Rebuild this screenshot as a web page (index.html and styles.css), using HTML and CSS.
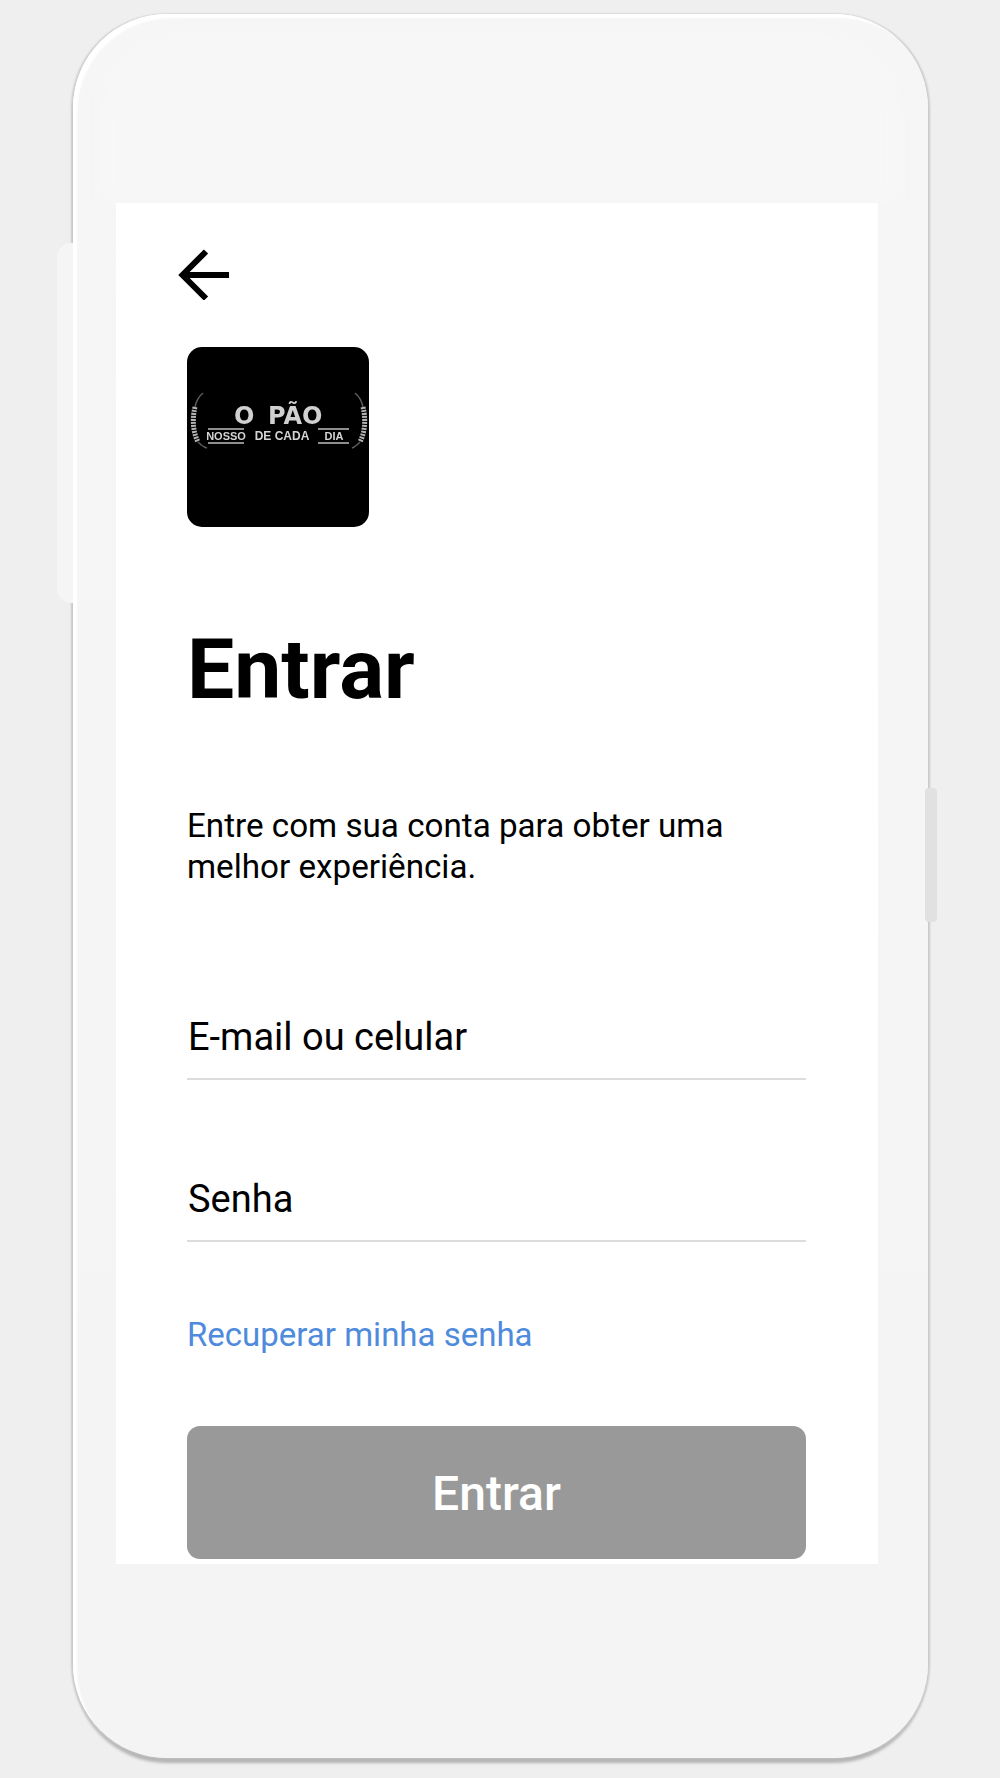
FILE: index.html
```html
<!DOCTYPE html>
<html lang="pt-BR">
<head>
<meta charset="utf-8">
<title>Entrar</title>
<link rel="stylesheet" href="styles.css">
</head>
<body>
<div class="phone">
  <span class="side-btn side-left"></span>
  <span class="side-btn side-right"></span>
  <div class="glare"></div>
  <main class="screen">
    <svg class="back" width="52" height="52" viewBox="0 0 52 52" aria-label="Voltar">
      <path d="M51 27H7M28 3.500 4.500 27 28 50.500" fill="none" stroke="#000" stroke-width="6"/>
    </svg>
    <div class="logo">
      <svg class="logo-art" width="182" height="180" viewBox="0 0 182 180">
        <g fill="none" stroke="#5c5c5c" stroke-width="1.500">
          <path d="M16 46C11 50 9 55 8 60"/>
          <path d="M11 95C13 97 16 100 20 101"/>
          <path d="M168 46C173 50 175 55 176 60"/>
          <path d="M173 95C171 97 168 100 165 101"/>
        </g>
        <g fill="none" stroke="#b4b4b4" stroke-width="5" stroke-dasharray="2 1">
          <path d="M8 60C5 72 6 85 11 95"/>
          <path d="M176 60C179 72 178 85 173 95"/>
        </g>
        <text class="logo-big" x="47" y="77">O</text>
        <text class="logo-big" x="81" y="77">PÃO</text>
        <text class="logo-small" x="39" y="93" text-anchor="middle">NOSSO</text>
        <text class="logo-small logo-mid" x="95" y="93" text-anchor="middle">DE CADA</text>
        <text class="logo-small" x="147" y="93" text-anchor="middle">DIA</text>
        <path class="logo-rule" d="M21 82H57M21 96H57M131 82H162M131 96H162"/>
      </svg>
    </div>
    <h1 class="title">Entrar</h1>
    <p class="intro">Entre com sua conta para obter uma melhor experiência.</p>
    <div class="field field-email">E-mail ou celular</div>
    <div class="field field-pass">Senha</div>
    <a class="recover" href="#">Recuperar minha senha</a>
    <button class="submit" type="button">Entrar</button>
  </main>
</div>
</body>
</html>
```
FILE: styles.css
```css
* { box-sizing: border-box; }
html, body { margin: 0; padding: 0; }
body {
  width: 1000px;
  height: 1778px;
  overflow: hidden;
  background: #efefef;
  font-family: Roboto, "Liberation Sans", sans-serif;
  padding: 14px 72px 0 73px;
}
.phone {
  position: relative;
  width: 855px;
  height: 1744px;
  border-radius: 94px;
  background: linear-gradient(#f6f6f6, #f5f5f5 50%, #f4f4f4);
  padding: 189px 50px 0 43px;
  box-shadow: inset 5px 5px 2px -1px #fff, 2px 0 2px #cacaca, -2px 0 2px #cacaca, 0 6px 3px -1px #b4b4b4;
}
.glare {
  position: absolute;
  left: 30px;
  right: 30px;
  top: 25px;
  height: 164px;
  border-radius: 70px 70px 0 0;
  background: #f7f7f7;
  filter: blur(8px);
  pointer-events: none;
}
.side-btn { position: absolute; }
.side-left {
  left: -16px;
  top: 229px;
  width: 16px;
  height: 360px;
  background: #f5f5f5;
  border-radius: 14px 0 0 14px;
}
.side-right {
  right: -9px;
  top: 774px;
  height: 134px;
  width: 12px;
  background: #e1e1e1;
  border-radius: 4px;
  filter: blur(0.5px);
}
.screen {
  position: relative;
  width: 762px;
  height: 1361px;
  background: #fff;
  padding: 45px 71px 0;
}
.back { display: block; margin-left: -9px; }
.logo {
  width: 182px;
  height: 180px;
  margin-top: 47px;
  background: #000;
  border-radius: 15px;
  overflow: hidden;
}
.logo-art { display: block; filter: blur(0.4px); }
.logo-big {
  font-family: "DejaVu Sans", sans-serif;
  font-weight: 700;
  font-size: 24px;
  fill: #d0d0d0;
}
.logo-small {
  font-family: "Liberation Sans", sans-serif;
  font-weight: 700;
  font-size: 11px;
  fill: #d4d4d4;
}
.logo-mid { font-size: 12px; }
.logo-rule { stroke: #bdbdbd; stroke-width: 1.500; fill: none; }
.title {
  margin: 95px 0 0;
  font-size: 84px;
  font-weight: 700;
  line-height: 96px;
  color: #000;
}
.intro {
  margin: 87px 0 0;
  width: 619px;
  font-size: 33.200px;
  line-height: 41px;
  color: #000;
}
.field {
  width: 619px;
  height: 68px;
  border-bottom: 2px solid #dcdcdc;
  font-size: 38px;
  line-height: 50px;
  color: #000;
  padding-left: 1px;
}
.field-email { margin-top: 125px; }
.field-pass { margin-top: 94px; }
.recover {
  display: block;
  margin-top: 72px;
  font-size: 33px;
  line-height: 42px;
  color: #4f8bdc;
  text-decoration: none;
}
.submit {
  display: block;
  width: 619px;
  height: 133px;
  margin-top: 70px;
  padding: 2px 0 0;
  border: 0;
  border-radius: 13px;
  background: #999;
  color: #fff;
  font-family: inherit;
  font-size: 48px;
  font-weight: 500;
}
```
